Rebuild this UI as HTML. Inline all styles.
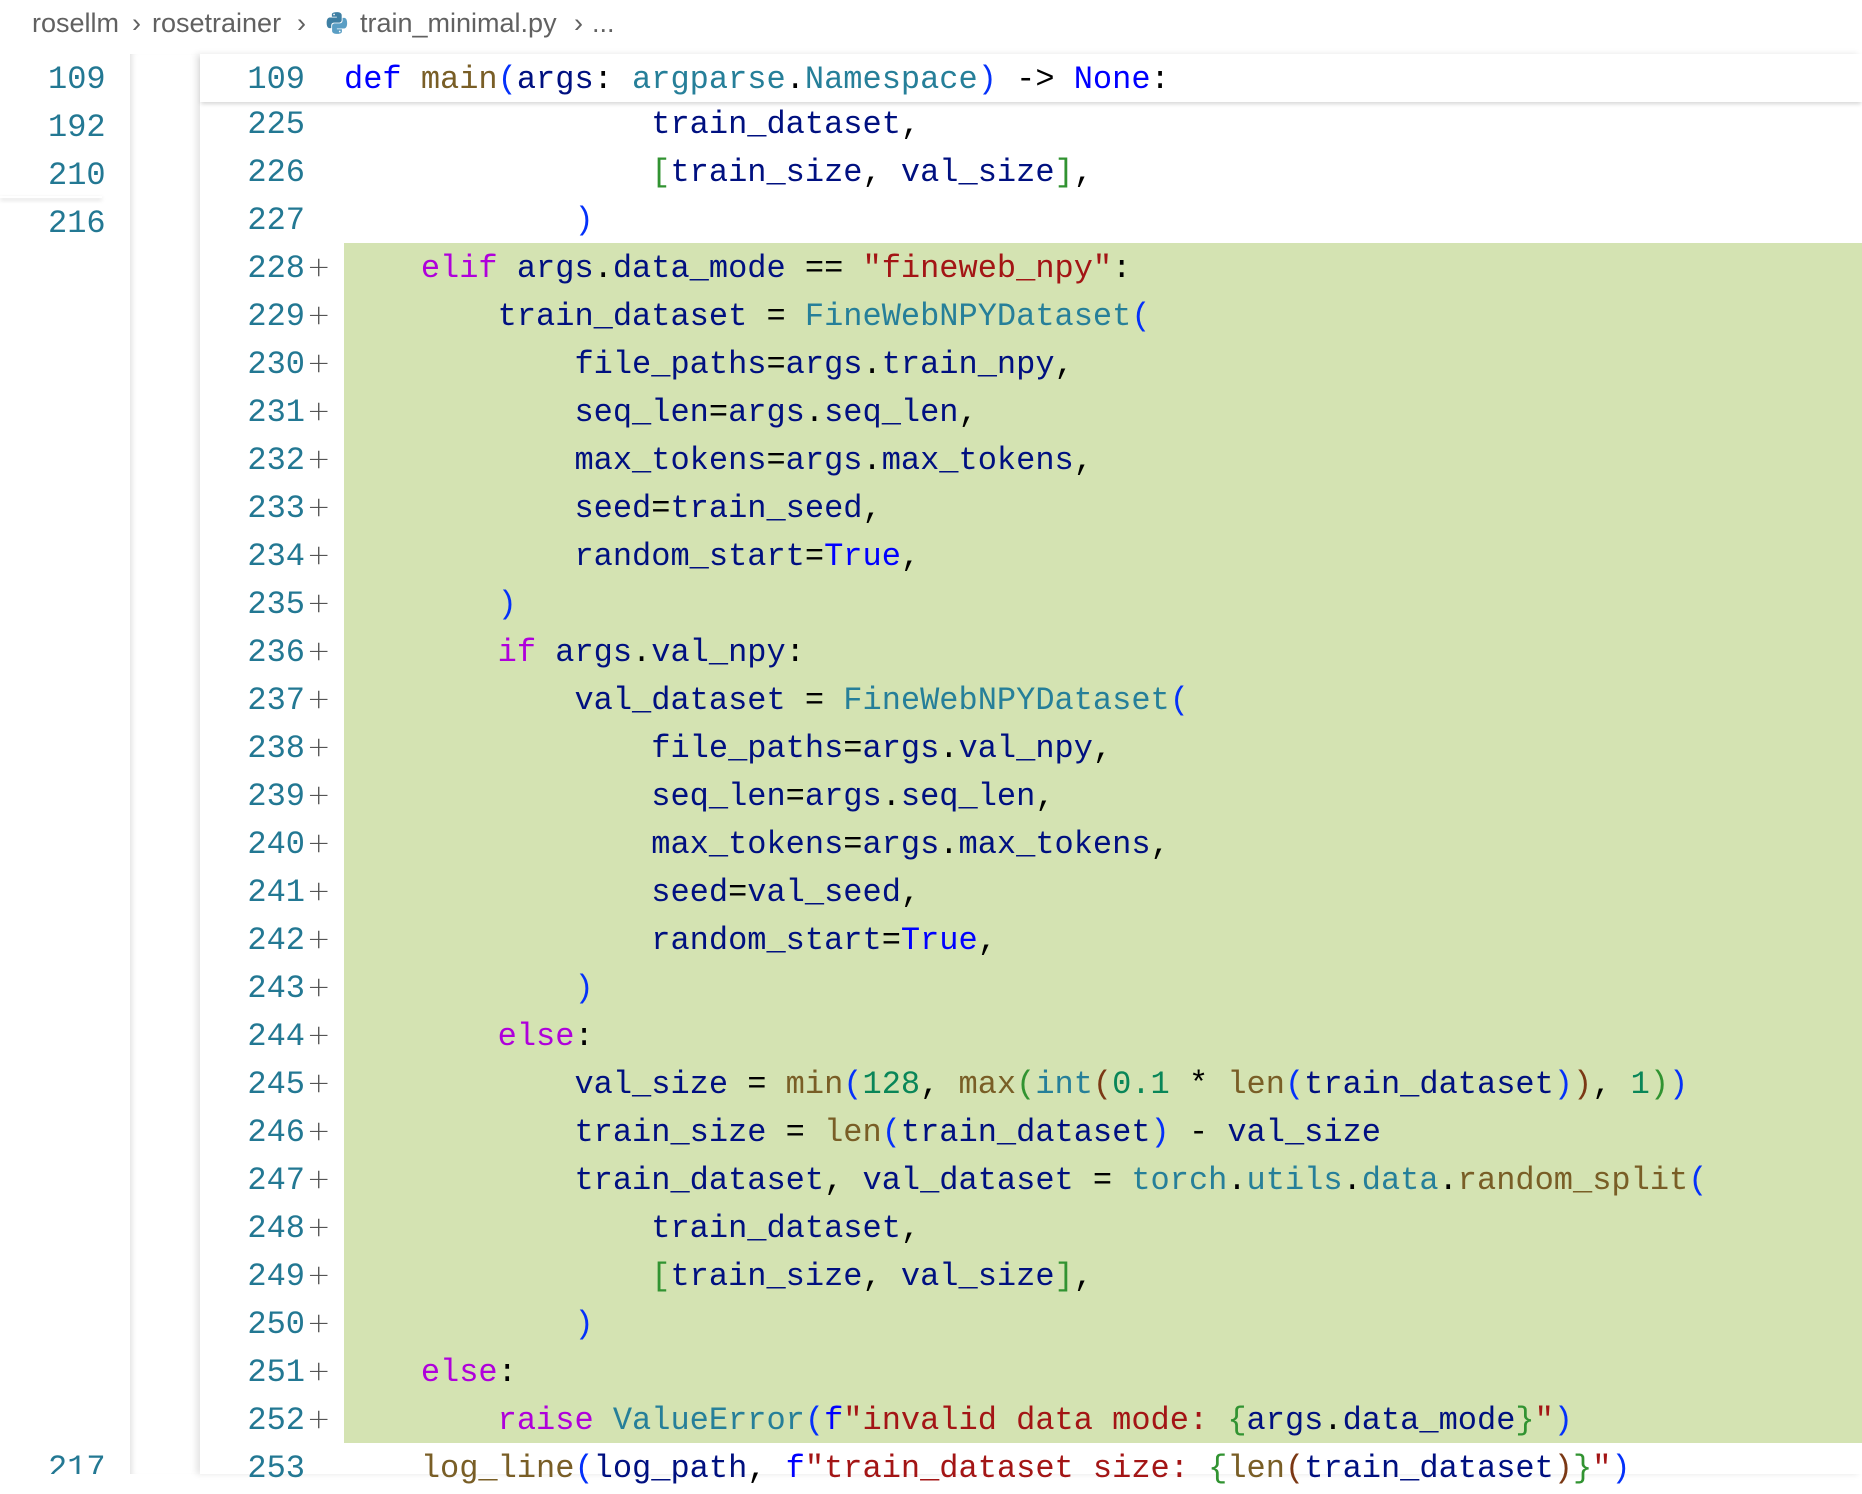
<!DOCTYPE html>
<html><head><meta charset="utf-8"><style>
*{margin:0;padding:0;box-sizing:border-box}
body{width:1862px;height:1474px;background:#fff;position:relative;overflow:hidden;font-family:"Liberation Mono",monospace;font-size:32px}
.bc{position:absolute;top:4px;height:38px;line-height:38px;font-family:"Liberation Sans",sans-serif;font-size:27px;color:#616161;white-space:pre}
.ln{position:absolute;height:48px;line-height:51px;color:#237893;white-space:pre}
.rn{left:200px;width:105px;text-align:right}
.pl{position:absolute;left:307px;width:20px;height:48px;line-height:48px;color:#555;font-family:"DejaVu Sans",sans-serif;font-size:28px;font-weight:200}
.cd{position:absolute;left:344px;height:48px;line-height:51px;white-space:pre;color:#000}
.g{position:absolute;left:344px;right:0;top:243px;height:1200px;background:#d4e3b2}
.v{color:#001080}.k{color:#0000ff}.p{color:#af00db}.f{color:#795e26}.c{color:#267f99}.s{color:#a31515}.n{color:#098658}
.b1{color:#0431fa}.b2{color:#319331}.b3{color:#7b3814}
.lc{position:absolute;left:0;top:54px;width:104px;height:1420px;overflow:hidden}
.lc .ln{left:48px}
</style></head><body>
<div class="bc" style="left:32px">rosellm</div>
<div class="bc" style="left:132px">›</div>
<div class="bc" style="left:152px">rosetrainer</div>
<div class="bc" style="left:297px">›</div>
<svg style="position:absolute;left:325px;top:11px" width="24" height="24" viewBox="0 0 22 22"><path d="M10.8 1C6 1 6.3 3.1 6.3 3.1V5.3h4.6V6H4.5S1.5 5.7 1.5 10.8s2.6 4.9 2.6 4.9h1.6v-2.4s-.1-2.6 2.6-2.6h4.5s2.5 0 2.5-2.4V4s.4-3-4.5-3zM8.3 2.4a.8.8 0 1 1 0 1.6.8.8 0 0 1 0-1.6z" fill="#3e7fa3"/><path d="M11 21c4.8 0 4.5-2.1 4.5-2.1v-2.2h-4.6V16h6.4s3 .3 3-4.8-2.6-4.9-2.6-4.9h-1.6v2.4s.1 2.6-2.6 2.6H9s-2.5 0-2.5 2.4V18s-.4 3 4.5 3zm2.5-1.4a.8.8 0 1 1 0-1.6.8.8 0 0 1 0 1.6z" fill="#5a9ec4"/></svg>
<div class="bc" style="left:360px">train_minimal.py</div>
<div class="bc" style="left:574px">›</div>
<div class="bc" style="left:592px">...</div>

<div style="position:absolute;left:130px;top:54px;width:70px;height:1420px;box-shadow:inset 6px 0 6px -4px rgba(0,0,0,.12)"></div>
<div style="position:absolute;left:200px;top:54px;width:1662px;height:1420px;box-shadow:-4px 0 6px rgba(0,0,0,.1)"></div>

<div class="lc">
<div class="ln" style="top:0">109</div>
<div class="ln" style="top:48px">192</div>
<div class="ln" style="top:96px">210</div>
<div class="ln" style="top:144px">216</div>
<div class="ln" style="top:1389px">217</div>
</div>
<div style="position:absolute;left:0;top:196px;width:102px;height:2px;box-shadow:0 2px 4px rgba(0,0,0,.18)"></div>

<div class="g"></div>

<div class="ln rn" style="top:99px">225</div><div class="cd" style="top:99px">                <span class="v">train_dataset</span>,</div>
<div class="ln rn" style="top:147px">226</div><div class="cd" style="top:147px">                <span class="b2">[</span><span class="v">train_size</span>, <span class="v">val_size</span><span class="b2">]</span>,</div>
<div class="ln rn" style="top:195px">227</div><div class="cd" style="top:195px">            <span class="b1">)</span></div>
<div class="ln rn" style="top:243px">228</div><div class="pl" style="top:243px">+</div><div class="cd" style="top:243px">    <span class="p">elif</span> <span class="v">args</span>.<span class="v">data_mode</span> == <span class="s">"fineweb_npy"</span>:</div>
<div class="ln rn" style="top:291px">229</div><div class="pl" style="top:291px">+</div><div class="cd" style="top:291px">        <span class="v">train_dataset</span> = <span class="c">FineWebNPYDataset</span><span class="b1">(</span></div>
<div class="ln rn" style="top:339px">230</div><div class="pl" style="top:339px">+</div><div class="cd" style="top:339px">            <span class="v">file_paths</span>=<span class="v">args</span>.<span class="v">train_npy</span>,</div>
<div class="ln rn" style="top:387px">231</div><div class="pl" style="top:387px">+</div><div class="cd" style="top:387px">            <span class="v">seq_len</span>=<span class="v">args</span>.<span class="v">seq_len</span>,</div>
<div class="ln rn" style="top:435px">232</div><div class="pl" style="top:435px">+</div><div class="cd" style="top:435px">            <span class="v">max_tokens</span>=<span class="v">args</span>.<span class="v">max_tokens</span>,</div>
<div class="ln rn" style="top:483px">233</div><div class="pl" style="top:483px">+</div><div class="cd" style="top:483px">            <span class="v">seed</span>=<span class="v">train_seed</span>,</div>
<div class="ln rn" style="top:531px">234</div><div class="pl" style="top:531px">+</div><div class="cd" style="top:531px">            <span class="v">random_start</span>=<span class="k">True</span>,</div>
<div class="ln rn" style="top:579px">235</div><div class="pl" style="top:579px">+</div><div class="cd" style="top:579px">        <span class="b1">)</span></div>
<div class="ln rn" style="top:627px">236</div><div class="pl" style="top:627px">+</div><div class="cd" style="top:627px">        <span class="p">if</span> <span class="v">args</span>.<span class="v">val_npy</span>:</div>
<div class="ln rn" style="top:675px">237</div><div class="pl" style="top:675px">+</div><div class="cd" style="top:675px">            <span class="v">val_dataset</span> = <span class="c">FineWebNPYDataset</span><span class="b1">(</span></div>
<div class="ln rn" style="top:723px">238</div><div class="pl" style="top:723px">+</div><div class="cd" style="top:723px">                <span class="v">file_paths</span>=<span class="v">args</span>.<span class="v">val_npy</span>,</div>
<div class="ln rn" style="top:771px">239</div><div class="pl" style="top:771px">+</div><div class="cd" style="top:771px">                <span class="v">seq_len</span>=<span class="v">args</span>.<span class="v">seq_len</span>,</div>
<div class="ln rn" style="top:819px">240</div><div class="pl" style="top:819px">+</div><div class="cd" style="top:819px">                <span class="v">max_tokens</span>=<span class="v">args</span>.<span class="v">max_tokens</span>,</div>
<div class="ln rn" style="top:867px">241</div><div class="pl" style="top:867px">+</div><div class="cd" style="top:867px">                <span class="v">seed</span>=<span class="v">val_seed</span>,</div>
<div class="ln rn" style="top:915px">242</div><div class="pl" style="top:915px">+</div><div class="cd" style="top:915px">                <span class="v">random_start</span>=<span class="k">True</span>,</div>
<div class="ln rn" style="top:963px">243</div><div class="pl" style="top:963px">+</div><div class="cd" style="top:963px">            <span class="b1">)</span></div>
<div class="ln rn" style="top:1011px">244</div><div class="pl" style="top:1011px">+</div><div class="cd" style="top:1011px">        <span class="p">else</span>:</div>
<div class="ln rn" style="top:1059px">245</div><div class="pl" style="top:1059px">+</div><div class="cd" style="top:1059px">            <span class="v">val_size</span> = <span class="f">min</span><span class="b1">(</span><span class="n">128</span>, <span class="f">max</span><span class="b2">(</span><span class="c">int</span><span class="b3">(</span><span class="n">0.1</span> * <span class="f">len</span><span class="b1">(</span><span class="v">train_dataset</span><span class="b1">)</span><span class="b3">)</span>, <span class="n">1</span><span class="b2">)</span><span class="b1">)</span></div>
<div class="ln rn" style="top:1107px">246</div><div class="pl" style="top:1107px">+</div><div class="cd" style="top:1107px">            <span class="v">train_size</span> = <span class="f">len</span><span class="b1">(</span><span class="v">train_dataset</span><span class="b1">)</span> - <span class="v">val_size</span></div>
<div class="ln rn" style="top:1155px">247</div><div class="pl" style="top:1155px">+</div><div class="cd" style="top:1155px">            <span class="v">train_dataset</span>, <span class="v">val_dataset</span> = <span class="c">torch</span>.<span class="c">utils</span>.<span class="c">data</span>.<span class="f">random_split</span><span class="b1">(</span></div>
<div class="ln rn" style="top:1203px">248</div><div class="pl" style="top:1203px">+</div><div class="cd" style="top:1203px">                <span class="v">train_dataset</span>,</div>
<div class="ln rn" style="top:1251px">249</div><div class="pl" style="top:1251px">+</div><div class="cd" style="top:1251px">                <span class="b2">[</span><span class="v">train_size</span>, <span class="v">val_size</span><span class="b2">]</span>,</div>
<div class="ln rn" style="top:1299px">250</div><div class="pl" style="top:1299px">+</div><div class="cd" style="top:1299px">            <span class="b1">)</span></div>
<div class="ln rn" style="top:1347px">251</div><div class="pl" style="top:1347px">+</div><div class="cd" style="top:1347px">    <span class="p">else</span>:</div>
<div class="ln rn" style="top:1395px">252</div><div class="pl" style="top:1395px">+</div><div class="cd" style="top:1395px">        <span class="p">raise</span> <span class="c">ValueError</span><span class="b1">(</span><span class="k">f</span><span class="s">"invalid data mode: </span><span class="b2">{</span><span class="v">args</span>.<span class="v">data_mode</span><span class="b2">}</span><span class="s">"</span><span class="b1">)</span></div>
<div class="ln rn" style="top:1443px">253</div><div class="cd" style="top:1443px">    <span class="f">log_line</span><span class="b1">(</span><span class="v">log_path</span>, <span class="k">f</span><span class="s">"train_dataset size: </span><span class="b2">{</span><span class="f">len</span><span class="b3">(</span><span class="v">train_dataset</span><span class="b3">)</span><span class="b2">}</span><span class="s">"</span><span class="b1">)</span></div>

<div style="position:absolute;left:200px;top:54px;width:1662px;height:48px;background:#fff;box-shadow:0 3px 4px -1px rgba(0,0,0,.16)">
<div class="ln" style="left:0;width:105px;text-align:right;top:0">109</div>
<div class="cd" style="top:0;left:144px"><span class="k">def</span> <span class="f">main</span><span class="b1">(</span><span class="v">args</span>: <span class="c">argparse</span>.<span class="c">Namespace</span><span class="b1">)</span> -&gt; <span class="k">None</span>:</div>
</div>
</body></html>
